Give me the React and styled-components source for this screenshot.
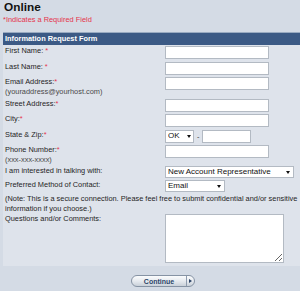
import React from 'react';
import styled, { createGlobalStyle } from 'styled-components';

const Global = createGlobalStyle`
  html, body {
    margin: 0;
    padding: 0;
    background: #d4dbe5;
  }
  body {
    font-family: "Liberation Sans", Arial, sans-serif;
    color: #1e1e1e;
  }
`;

const Page = styled.div`
  width: 300px;
  height: 291px;
  overflow: hidden;
  background: #d4dbe5;
`;

const Top = styled.div`
  padding: 0 4px;
  margin-bottom: 6px;
`;

const Title = styled.h1`
  margin: 0;
  font-size: 11.8px;
  line-height: 14px;
  font-weight: bold;
  color: #111;
`;

const Required = styled.div`
  font-size: 7.4px;
  line-height: 12px;
  color: #e5334b;
  margin-left: -1px;
`;

const Panel = styled.form`
  margin: 0 0 0 3px;
  background: #dee3eb;
  padding-bottom: 3px;
`;

const Header = styled.div`
  height: 12px;
  border-top: 1px solid #9aabc1;
  background: #3c5a85;
  color: #fff;
  font-weight: bold;
  font-size: 7.4px;
  line-height: 12px;
  padding-left: 2px;
`;

const Row = styled.div`
  display: grid;
  grid-template-columns: 160px 1fr;
  align-items: start;
  padding: ${p => p.$pad || '1px 0 1.5px'};
  padding-left: 2px;
`;

const Label = styled.label`
  font-size: 7.4px;
  line-height: 9.5px;
  color: #1e1e1e;
`;

const Star = styled.span`
  color: #e5334b;
`;

const Hint = styled.span`
  display: block;
  color: #4a4a4a;
`;

const Note = styled.p`
  margin: 0;
  grid-column: 1 / -1;
  font-size: 7.4px;
  line-height: 10px;
  white-space: nowrap;
  color: #1e1e1e;
`;

const Field = styled.div`
  display: flex;
  align-items: center;
  gap: 3px;
  height: ${p => p.$h ? `${p.$h}px` : 'auto'};
`;

const TextInput = styled.input`
  display: block;
  box-sizing: border-box;
  width: ${p => p.$w || 104}px;
  height: 13px;
  margin: 0;
  padding: 0 2px;
  border: 1px solid #b3bac3;
  background: #fff;
  font: 8px "Liberation Sans", Arial, sans-serif;
`;

const SelectWrap = styled.div`
  position: relative;
  flex: none;
  width: ${p => p.$w}px;
  height: ${p => p.$h}px;
`;

const Select = styled.select`
  appearance: none;
  display: block;
  box-sizing: border-box;
  width: ${p => p.$w}px;
  height: ${p => p.$h}px;
  min-height: 0;
  margin: 0;
  padding: 0 0 0 2px;
  border: 1px solid #b3bac3;
  border-radius: 0;
  background: #fff;
  color: #111;
  font: 8px/10px "Liberation Sans", Arial, sans-serif;
`;

const Arrow = styled.span`
  position: absolute;
  right: ${p => p.$r}px;
  top: 50%;
  margin-top: -1.5px;
  width: 0;
  height: 0;
  border-left: 2.5px solid transparent;
  border-right: 2.5px solid transparent;
  border-top: 3px solid #111;
  pointer-events: none;
`;

const Dash = styled.span`
  font-size: 7.4px;
  line-height: 9px;
  color: #333;
`;

const Comments = styled.textarea`
  display: block;
  box-sizing: border-box;
  width: 119px;
  height: 49px;
  margin: 0;
  border: 1px solid #b3bac3;
  background: #fff;
  resize: both;
`;

const ButtonRow = styled.div`
  display: flex;
  padding: 9px 0 0 131px;
`;

const Continue = styled.button`
  display: inline-flex;
  align-items: stretch;
  height: 12px;
  padding: 0;
  border: 1px solid #8693a4;
  border-radius: 6px;
  background: linear-gradient(#fbfcfd, #e6eaef 50%, #c9d0d9);
  overflow: hidden;
  cursor: pointer;
`;

const ButtonText = styled.span`
  display: flex;
  align-items: center;
  justify-content: center;
  width: 54px;
  font: bold 7px "Liberation Sans", Arial, sans-serif;
  color: #2c4468;
`;

const ButtonArrow = styled.span`
  display: flex;
  align-items: center;
  justify-content: center;
  width: 7px;
  border-left: 1px solid #8e9bad;
  &::after {
    content: '';
    border-top: 2.5px solid transparent;
    border-bottom: 2.5px solid transparent;
    border-left: 3px solid #2c4468;
    margin-left: -1px;
  }
`;

function SelectBox({ w, h = 12, r = 4, value, options }) {
  return (
    <SelectWrap $w={w} $h={h}>
      <Select $w={w} $h={h} defaultValue={value}>
        {options.map(o => <option key={o}>{o}</option>)}
      </Select>
      <Arrow $r={r} />
    </SelectWrap>
  );
}

export default function App() {
  return (
    <Page>
      <Global />
      <Top>
        <Title>Online</Title>
        <Required>*Indicates a Required Field</Required>
      </Top>
      <Panel onSubmit={e => e.preventDefault()}>
        <Header>Information Request Form</Header>
        <Row>
          <Label>First Name: <Star>*</Star></Label>
          <Field><TextInput /></Field>
        </Row>
        <Row>
          <Label>Last Name: <Star>*</Star></Label>
          <Field><TextInput /></Field>
        </Row>
        <Row>
          <Label>Email Address:<Star>*</Star><Hint>(youraddress@yourhost.com)</Hint></Label>
          <Field><TextInput /></Field>
        </Row>
        <Row>
          <Label>Street Address:<Star>*</Star></Label>
          <Field><TextInput /></Field>
        </Row>
        <Row>
          <Label>City:<Star>*</Star></Label>
          <Field><TextInput /></Field>
        </Row>
        <Row>
          <Label>State &amp; Zip:<Star>*</Star></Label>
          <Field $h={13}>
            <SelectBox w={29} h={13} r={3} value="OK" options={['OK', 'AR', 'KS', 'TX']} />
            <Dash>-</Dash>
            <TextInput $w={49} />
          </Field>
        </Row>
        <Row>
          <Label>Phone Number:<Star>*</Star><Hint>(xxx-xxx-xxxx)</Hint></Label>
          <Field><TextInput /></Field>
        </Row>
        <Row $pad="0.5px 0 1px">
          <Label>I am interested in talking with:</Label>
          <Field $h={12}>
            <SelectBox w={129} value="New Account Representative" options={['New Account Representative', 'Customer Service', 'Loan Officer']} />
          </Field>
        </Row>
        <Row $pad="1px 0 1px">
          <Label>Preferred Method of Contact:</Label>
          <Field $h={12}>
            <SelectBox w={60} value="Email" options={['Email', 'Phone', 'Mail']} />
          </Field>
        </Row>
        <Row $pad="1px 0 0">
          <Note>
            (Note: This is a secure connection. Please feel free to submit confidential and/or sensitive<br />
            information if you choose.)
          </Note>
        </Row>
        <Row $pad="0">
          <Label>Questions and/or Comments:</Label>
          <Field><Comments /></Field>
        </Row>
      </Panel>
      <ButtonRow>
        <Continue type="button">
          <ButtonText>Continue</ButtonText>
          <ButtonArrow />
        </Continue>
      </ButtonRow>
    </Page>
  );
}
